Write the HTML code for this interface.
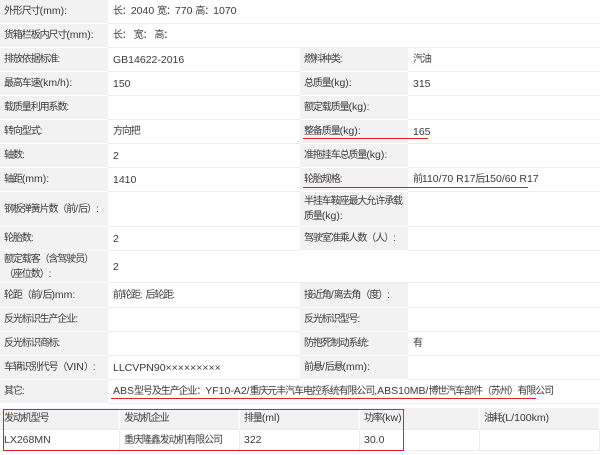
<!DOCTYPE html><html><head><meta charset="utf-8"><style>
*{margin:0;padding:0;box-sizing:border-box}
body{width:600px;height:455px;background:#fff;font-family:"Liberation Sans","Noto Sans CJK SC",sans-serif;font-size:10.5px;color:#3a3a3a;position:relative;overflow:hidden}
.c{position:absolute;display:flex;align-items:center;border-bottom:1px solid #ececec;line-height:14px;white-space:nowrap;overflow:hidden}
.c>div{white-space:nowrap}
.l{background:#f2f2f2;padding-left:4px;border-bottom:1px solid #fff}
.v{background:#fff;padding-left:5px}
.k{font-size:10px;letter-spacing:-1.1px}
.r{position:absolute;background:#e0202a;height:1px}
</style></head><body>
<div id="t"></div>
<script>
function K(s){return '<div>'+s.replace(/[\u3000-\u9fff\uff00-\uffef]+/g,function(m){return '<span class="k">'+m+'</span>';})+'</div>';}
var rows=[
[0,24,"外形尺寸(mm):","长：2040 宽：770 高：1070",null,null],
[24,48,"货箱栏板内尺寸(mm):","长： 宽： 高：",null,null],
[48,72,"排放依据标准:","GB14622-2016","燃料种类:","汽油"],
[72,96,"最高车速(km/h):","150","总质量(kg):","315"],
[96,120,"载质量利用系数:","","额定载质量(kg):",""],
[120,144,"转向型式:","方向把","整备质量(kg):","165"],
[144,168,"轴数:","2","准拖挂车总质量(kg):",""],
[168,192,"轴距(mm):","1410","轮胎规格:","前110/70 R17后150/60 R17"],
[192,227,"钢板弹簧片数（前/后）:","","半挂车鞍座最大允许承载<br>质量(kg):",""],
[227,251,"轮胎数:","2","驾驶室准乘人数（人）:",""],
[251,283,"额定载客（含驾驶员）<br>（座位数）:","2","",""],
[283,308,"轮距（前/后)mm:","前轮距: 后轮距:","接近角/离去角（度）:",""],
[308,332,"反光标识生产企业:","","反光标识型号:",""],
[332,356,"反光标识商标:","","防抱死制动系统:","有"],
[356,380,"车辆识别代号（VIN）:","LLCVPN90×××××××××","前悬/后悬(mm):",""],
[380,404,"其它:","ABS型号及生产企业：YF10-A2/重庆元丰汽车电控系统有限公司,ABS10MB/博世汽车部件（苏州）有限公司",null,null]];
var h="";
rows.forEach(function(r){var y=r[0],hh=r[1]-r[0];
h+='<div class="c l" style="left:0;top:'+y+'px;width:108px;height:'+hh+'px">'+K(r[2])+'</div>';
if(r[4]===null){h+='<div class="c v" style="left:108px;top:'+y+'px;width:492px;height:'+hh+'px">'+K(r[3])+'</div>';}
else{var lb=r[4]===""&&r[2].indexOf("额定载客")==0;
h+='<div class="c v" style="left:108px;top:'+y+'px;width:192px;height:'+hh+'px">'+K(r[3])+'</div>';
if(lb){h+='<div class="c v" style="left:300px;top:'+y+'px;width:300px;height:'+hh+'px"></div>';}
else{h+='<div class="c l" style="left:300px;top:'+y+'px;width:108px;height:'+hh+'px">'+K(r[4])+'</div>';
h+='<div class="c v" style="left:408px;top:'+y+'px;width:192px;height:'+hh+'px">'+K(r[5])+'</div>';}}
});
var hd=["发动机型号","发动机企业","排量(ml)","功率(kw)","油耗(L/100km)"],dv=["LX268MN","重庆隆鑫发动机有限公司","322","30.0",""];
for(var i=0;i<5;i++){h+='<div class="c" style="left:'+(i*120)+'px;top:408px;width:120px;height:22px;background:#f2f2f2;padding-left:4px;border-right:1px solid #fff">'+K(hd[i])+'</div>';
h+='<div class="c" style="left:'+(i*120)+'px;top:430px;width:120px;height:21px;background:#fff;padding-left:4px;border-right:1px solid #ececec">'+K(dv[i])+'</div>';}
document.getElementById("t").innerHTML=h;
</script>
<div style="position:absolute;left:3px;top:409px;width:401px;height:42px;border:1px solid #e0202a"></div>
<div class="r" style="left:303px;top:138px;width:125px"></div>
<div class="r" style="left:303px;top:187px;width:225px"></div>
<div class="r" style="left:111px;top:398px;width:425px"></div>
</body></html>
